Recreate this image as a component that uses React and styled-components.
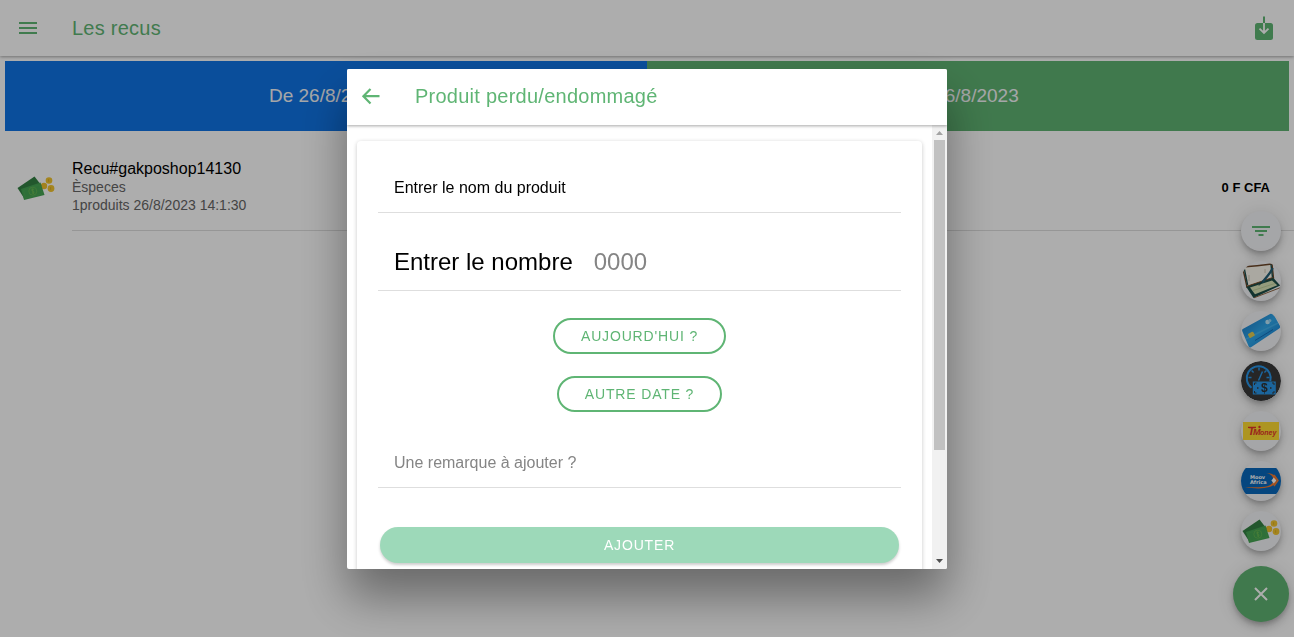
import React from "react";
import styled, { createGlobalStyle } from "styled-components";

const MenuIcon = () => (
  <svg width="24" height="24" viewBox="0 0 24 24" fill="currentColor" aria-hidden="true">
    <path d="M3 18h18v-2H3v2zm0-5h18v-2H3v2zm0-7v2h18V6H3z" />
  </svg>
);

const DownloadIcon = () => (
  <svg width="24" height="24" viewBox="0 0 24 24" fill="none" aria-hidden="true">
    <rect x="3" y="7" width="18" height="17" rx="2.5" fill="currentColor" />
    <path d="M12 0.5v7" stroke="currentColor" strokeWidth="2" />
    <path d="M12 7v10M7.5 12.6l4.5 4.4 4.5-4.4" stroke="#fff" strokeWidth="1.8" />
  </svg>
);

const BackIcon = () => (
  <svg width="24" height="24" viewBox="0 0 24 24" fill="none" aria-hidden="true">
    <path d="M11.5 4L4.4 11.2l7.1 7.2M4 11.2h16.5" stroke="currentColor" strokeWidth="2.2" />
  </svg>
);

const CloseIcon = () => (
  <svg width="24" height="24" viewBox="0 0 24 24" aria-hidden="true">
    <path d="M6 6l12 12M18 6L6 18" stroke="currentColor" strokeWidth="2" />
  </svg>
);

const FilterIcon = () => (
  <svg width="40" height="40" viewBox="0 0 40 40" fill="#5fb574" aria-hidden="true">
    <path d="M11 15h18v2H11zM14 19h12v2H14zM17.5 23h5v2h-5z" />
  </svg>
);

const CashIcon = () => (
  <svg width="40" height="40" viewBox="0 0 40 40" aria-hidden="true">
    <circle cx="28" cy="18" r="3.2" fill="#f0c02c" />
    <circle cx="33" cy="12.5" r="3.3" fill="#f2c42e" />
    <circle cx="35" cy="20.5" r="3.4" fill="#f2c42e" />
    <path d="M32.6 11.2v2.6M34.6 19.2v2.6" stroke="#dcae24" strokeWidth="1" />
    <path d="M1.5 20L18.5 8.5l7 9L8 30z" fill="#338143" />
    <path d="M5 21L24.5 14.5l4 12.5L8 32z" fill="#45a453" />
    <path d="M7.6 22.2l15.8-5.2 2.8 8.8-16.8 4.1z" fill="none" stroke="#4faa58" strokeWidth="0.6" />
    <circle cx="16.8" cy="23.2" r="4" fill="none" stroke="#62b452" strokeWidth="0.9" />
    <path d="M18 21.4c-2.6-.8-3.2 1-1.3 1.6 2.2.6 1.8 2.6-.7 1.9M16.2 20.4l1.2 5.6" fill="none" stroke="#6fbd52" strokeWidth="0.8" />
  </svg>
);

const LedgerIcon = () => (
  <svg width="40" height="40" viewBox="0 0 40 40" aria-hidden="true">
    <path d="M1.5 6Q16 5 31 3l1.5 14L6 26z" fill="#fbf8ed" stroke="#6b4527" strokeWidth="1.4" />
    <path d="M3 6.2L6.6 24M30 3.5l1.5 13" stroke="#1f4f4e" strokeWidth="1.4" />
    <path d="M8 14v6M24 8v4" stroke="#c9bfa8" strokeWidth="0.8" />
    <path d="M5 25.5l27-9 7.2 8L12.5 37z" fill="#1c4d48" />
    <path d="M9 26.6l22-7.1 5.3 4.8L14 33.2z" fill="#dbe5b9" />
    <path d="M12 29.5l22-7" stroke="#b1c590" strokeWidth="0.7" />
    <path d="M5.2 25.5l26.5-9M13 36.8l26-10" stroke="#80522d" strokeWidth="0.9" />
    <path d="M31.5 7c-1 4-5 8-10.5 14.5" fill="none" stroke="#245d73" strokeWidth="2.4" />
    <path d="M21.5 20.5L18 24.5" stroke="#173c44" strokeWidth="1" />
  </svg>
);

const CardIcon = () => (
  <svg width="40" height="40" viewBox="0 0 40 40" aria-hidden="true">
    <defs>
      <linearGradient id="bankCard" x1="0" y1="0" x2="1" y2="1">
        <stop offset="0" stopColor="#1470bd" />
        <stop offset="0.5" stopColor="#2fa8ec" />
        <stop offset="1" stopColor="#1173c9" />
      </linearGradient>
    </defs>
    <path d="M1.8 18L30 2.6q1.8-.8 2.6.8L39 15q.8 1.5-.8 2.5L10 36.3q-1.5.8-2.2-.6L1.2 20q-.5-1.3.6-2z" fill="url(#bankCard)" />
    <path d="M5 28L37 12" stroke="#58c1f4" strokeWidth="1.4" opacity="0.5" />
    <path d="M14 29.5l18-11" stroke="#1469b4" strokeWidth="0.9" />
    <rect x="7.5" y="21.5" width="6" height="4.6" rx="1" transform="rotate(-30 10.5 24)" fill="#e1cc51" />
    <circle cx="26.6" cy="11" r="2.3" fill="#bde8fb" />
    <circle cx="28.8" cy="9.6" r="1.6" fill="#8fd3f5" />
  </svg>
);

const CreditIcon = () => (
  <svg width="40" height="40" viewBox="0 0 40 40" aria-hidden="true">
    <circle cx="20" cy="20" r="20" fill="#383838" />
    <path d="M10.5 26.8a12 12 0 1 1 18.8-6.5" fill="none" stroke="#2996e8" strokeWidth="2" />
    <path d="M18 6.5v3M7.5 16.5h3M25.5 16.5h3M10.6 9.5l2 2M25.4 9.5l-2 2M17.5 19.5L21.5 10.5" stroke="#2996e8" strokeWidth="1.5" />
    <path d="M11.8 20.5h23v13h-23z" fill="#2996e8" />
    <path d="M13.5 24v-2h2M31 22h2v2M13.5 30v2h2M31 32h2v-2" fill="none" stroke="#383838" strokeWidth="1" />
    <path d="M16 27h1.5M29 27h1.5" stroke="#383838" strokeWidth="1.5" />
    <text x="23.3" y="31.3" textAnchor="middle" fontFamily="Liberation Sans, sans-serif" fontSize="12" fontWeight="bold" fill="#303030">$</text>
  </svg>
);

const TMoneyLogo = () => (
  <svg width="40" height="40" viewBox="0 0 40 40" aria-hidden="true">
    <rect x="2" y="11" width="36" height="18" fill="#ffdc33" />
    <g fontFamily="Liberation Sans, sans-serif" fontStyle="italic" fontWeight="bold" fill="#e3342b">
      <text x="7" y="24" fontSize="11">T</text>
      <text x="12" y="24" fontSize="9">M</text>
      <text x="19" y="24" fontSize="7">oney</text>
    </g>
    <path d="M7 16.4h8" stroke="#e3342b" strokeWidth="1.4" />
    <circle cx="18.5" cy="16" r="1.2" fill="#e3342b" />
  </svg>
);

const MoovLogo = () => (
  <svg width="40" height="40" viewBox="0 0 40 40" aria-hidden="true">
    <rect y="7" width="40" height="26" fill="#0868bc" />
    <path d="M25 12c7 1 8 6 7 9-2 5-12 6-28 5 15 3 27 1 31-4 3-5-2-10-10-10z" fill="#f17a30" />
    <path d="M33 14l4 5.5-4 5.5" fill="none" stroke="#f17a30" strokeWidth="1.4" />
    <path d="M32.8 16.5l2.5 3-2.5 3-2.4-3z" fill="#fff" />
    <g fontFamily="DejaVu Sans, sans-serif" fontWeight="bold" fontSize="5" fill="#fff">
      <text x="9" y="18">Moov</text>
      <text x="9" y="23">Africa</text>
    </g>
  </svg>
);

const payments = [
  { name: "Filtrer", Icon: FilterIcon },
  { name: "Carnet", Icon: LedgerIcon },
  { name: "Carte bancaire", Icon: CardIcon },
  { name: "Crédit", Icon: CreditIcon },
  { name: "TMoney", Icon: TMoneyLogo },
  { name: "Moov Africa", Icon: MoovLogo },
  { name: "Èspeces", Icon: CashIcon },
];

const App = () => {
  return (
    <>
      <GlobalStyle />
      <Page>
        <Header>
          <IconButton type="button" aria-label="Menu">
            <MenuIcon />
          </IconButton>
          <Title>Les recus</Title>
          <IconButton type="button" aria-label="Télécharger">
            <DownloadIcon />
          </IconButton>
        </Header>
        <Period>
          <PeriodButton type="button" $color="#1074e5">De 26/8/2023</PeriodButton>
          <PeriodButton type="button" $color="#5fb372">A 26/8/2023</PeriodButton>
        </Period>
        <Receipt>
          <CashIcon />
          <ReceiptBody>
            <ReceiptText>
              <h2>Recu#gakposhop14130</h2>
              <p>Èspeces</p>
              <p>1produits 26/8/2023 14:1:30</p>
            </ReceiptText>
            <Amount>0 F CFA</Amount>
          </ReceiptBody>
        </Receipt>
      </Page>
      <Fab>
        <FabList>
          {payments.map(({ name, Icon }) => (
            <FabItem key={name} type="button" aria-label={name}>
              <Icon />
            </FabItem>
          ))}
        </FabList>
        <FabMain type="button" aria-label="Fermer">
          <CloseIcon />
        </FabMain>
      </Fab>
      <Backdrop>
        <Modal role="dialog" aria-modal="true" aria-labelledby="modal-title">
          <ModalHeader>
            <IconButton type="button" aria-label="Retour">
              <BackIcon />
            </IconButton>
            <Title id="modal-title">Produit perdu/endommagé</Title>
          </ModalHeader>
          <ModalBody>
            <ModalContent>
              <Card>
                <Field>
                  <DarkInput aria-label="Entrer le nom du produit" placeholder="Entrer le nom du produit" />
                </Field>
                <LargeField>
                  <label htmlFor="nombre">Entrer le nombre</label>
                  <Input id="nombre" placeholder="0000" />
                </LargeField>
                <Dates>
                  <OutlineButton type="button">AUJOURD'HUI ?</OutlineButton>
                  <OutlineButton type="button">AUTRE DATE ?</OutlineButton>
                </Dates>
                <Field>
                  <Input aria-label="Une remarque à ajouter ?" placeholder="Une remarque à ajouter ?" />
                </Field>
                <SubmitButton type="button">AJOUTER</SubmitButton>
              </Card>
            </ModalContent>
            <ScrollBar aria-hidden="true">
              <ScrollArrow $color="#a3a3a3">
                <path d="M4 10L7.5 6L11 10z" />
              </ScrollArrow>
              <ScrollTrack>
                <ScrollThumb />
              </ScrollTrack>
              <ScrollArrow $color="#505050">
                <path d="M4 5L7.5 9L11 5z" />
              </ScrollArrow>
            </ScrollBar>
          </ModalBody>
        </Modal>
      </Backdrop>
    </>
  );
};

export default App;

const GlobalStyle = createGlobalStyle`
  * {
    box-sizing: border-box;
  }

  body {
    margin: 0;
    background: #fff;
    font-family: "Liberation Sans", Arial, sans-serif;
  }

  button, input {
    font-family: inherit;
  }

  svg {
    display: block;
    flex-shrink: 0;
  }
`;

const Page = styled.main`
  min-height: 100vh;
`;

const Header = styled.header`
  display: flex;
  align-items: center;
  height: 56px;
  padding: 0 14px 0 12px;
  background: #fff;
  color: #5fb574;
  box-shadow: 0 1px 3px rgba(0, 0, 0, 0.35);
`;

const IconButton = styled.button`
  display: flex;
  align-items: center;
  justify-content: center;
  width: 32px;
  height: 40px;
  padding: 0;
  border: 0;
  background: none;
  color: #5fb574;
`;

const Title = styled.h1`
  flex: 1;
  margin: 0 0 0 28px;
  font-size: 20px;
  font-weight: 400;
  letter-spacing: 0.0125em;
  color: #5fb574;
`;

const Period = styled.div`
  display: grid;
  grid-template-columns: 1fr 1fr;
  padding: 5px;
`;

const PeriodButton = styled.button`
  height: 70px;
  padding: 0;
  border: 0;
  background: ${({ $color }) => $color};
  color: #f4f5f8;
  font-size: 19px;
`;

const Receipt = styled.article`
  display: flex;
  align-items: center;
  gap: 16px;
  padding: 8px 0 0 16px;
`;

const ReceiptBody = styled.div`
  flex: 1;
  display: flex;
  align-items: center;
  justify-content: space-between;
  height: 87px;
  padding-right: 24px;
  border-bottom: 1px solid #dedede;
`;

const ReceiptText = styled.div`
  h2 {
    margin: 0;
    font-size: 16px;
    font-weight: 400;
    line-height: 18px;
  }

  p {
    margin: 0;
    font-size: 14px;
    line-height: 18px;
    color: #666;
  }
`;

const Amount = styled.strong`
  font-size: 13px;
`;

const Fab = styled.div`
  position: fixed;
  right: 5px;
  bottom: 15px;
  display: flex;
  flex-direction: column;
  align-items: center;
  gap: 15px;
`;

const FabList = styled.div`
  display: flex;
  flex-direction: column;
  gap: 10px;
`;

const fabShadow = `
  box-shadow: 0 3px 5px -1px rgba(0, 0, 0, 0.2), 0 6px 10px rgba(0, 0, 0, 0.14), 0 1px 18px rgba(0, 0, 0, 0.12);
`;

const FabItem = styled.button`
  width: 40px;
  height: 40px;
  padding: 0;
  border: 0;
  border-radius: 50%;
  overflow: hidden;
  background: #f4f5f8;
  ${fabShadow}
`;

const FabMain = styled.button`
  display: flex;
  align-items: center;
  justify-content: center;
  width: 56px;
  height: 56px;
  padding: 0;
  border: 0;
  border-radius: 50%;
  background: #5fb372;
  color: #fff;
  ${fabShadow}
`;

const Backdrop = styled.div`
  position: fixed;
  inset: 0;
  display: flex;
  align-items: center;
  justify-content: center;
  background: rgba(0, 0, 0, 0.32);
`;

const Modal = styled.section`
  display: flex;
  flex-direction: column;
  width: 600px;
  max-width: 100%;
  height: 500px;
  max-height: 100%;
  border-radius: 2px;
  overflow: hidden;
  background: #fff;
  box-shadow: 0 28px 48px rgba(0, 0, 0, 0.4);
`;

const ModalHeader = styled.header`
  position: relative;
  z-index: 1;
  flex-shrink: 0;
  display: flex;
  align-items: center;
  height: 56px;
  padding: 0 8px;
  background: #fff;
  box-shadow: 0 1px 3px rgba(0, 0, 0, 0.35);
`;

const ModalBody = styled.div`
  flex: 1;
  display: flex;
  min-height: 0;
`;

const ModalContent = styled.div`
  flex: 1;
  overflow-y: auto;
  padding: 16px 10px;
  scrollbar-width: none;
`;

const ScrollBar = styled.div`
  display: flex;
  flex-direction: column;
  width: 15px;
  background: #f1f1f1;
`;

const ScrollArrow = styled.svg.attrs({ viewBox: "0 0 15 15" })`
  width: 15px;
  height: 15px;
  fill: ${({ $color }) => $color};
`;

const ScrollTrack = styled.div`
  flex: 1;
  padding: 0 2px;
`;

const ScrollThumb = styled.div`
  height: 75%;
  background: #c1c1c1;
`;

const Card = styled.form`
  display: flex;
  flex-direction: column;
  min-height: 559px;
  padding: 21px;
  border-radius: 4px;
  box-shadow: 0 1px 4px rgba(0, 0, 0, 0.22);
`;

const Field = styled.div`
  display: flex;
  align-items: center;
  height: 51px;
  padding: 2px 16px 0;
  border-bottom: 1px solid #dedede;
  font-size: 16px;
`;

const LargeField = styled(Field)`
  gap: 21px;
  height: 58px;
  margin-top: 20px;
  font-size: 24px;
`;

const Input = styled.input`
  flex: 1;
  min-width: 0;
  padding: 0;
  border: 0;
  outline: 0;
  background: none;
  font-size: inherit;

  &::placeholder {
    color: #858585;
  }
`;

const DarkInput = styled(Input)`
  &::placeholder {
    color: #000;
  }
`;

const Dates = styled.div`
  display: flex;
  flex-direction: column;
  align-items: center;
  gap: 22px;
  padding: 27px 0 25px;
`;

const OutlineButton = styled.button`
  height: 36px;
  padding: 0 26px;
  border: 2px solid #5fb574;
  border-radius: 18px;
  background: none;
  color: #5fb574;
  font-size: 14px;
  letter-spacing: 0.06em;
`;

const SubmitButton = styled.button`
  height: 36px;
  margin: 39px 2px 0;
  border: 0;
  border-radius: 18px;
  background: #9dd9b9;
  color: #fff;
  font-size: 14px;
  letter-spacing: 0.06em;
  box-shadow: 0 2px 3px rgba(0, 0, 0, 0.2);
`;
